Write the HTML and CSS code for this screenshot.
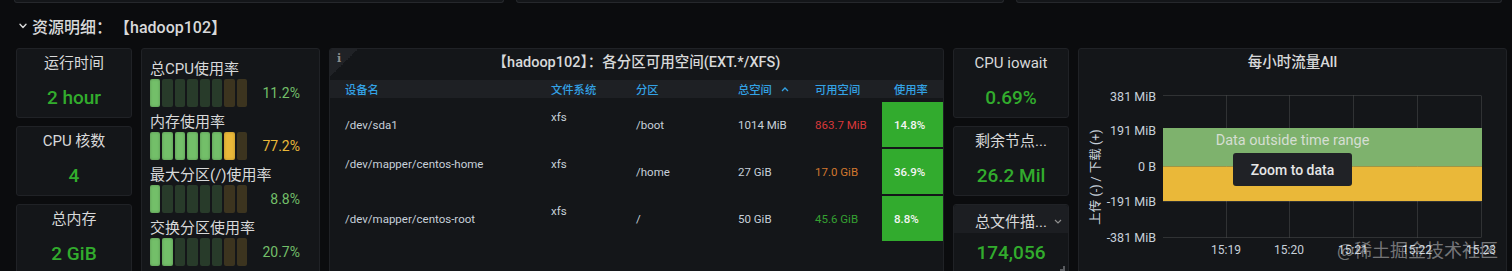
FILE: index.html
```html
<!DOCTYPE html>
<html lang="zh-CN">
<head>
<meta charset="utf-8">
<title>资源明细</title>
<link rel="stylesheet" href="styles.css">
</head>
<body>
<div class="topstrip">
  <div class="stub s1"></div>
  <div class="stub s2"></div>
  <div class="stub s3"></div>
</div>

<div class="rowhead">
  <svg class="chev" viewBox="0 0 8 6" width="8" height="6"><path d="M1 1.2 L4 4.4 L7 1.2" fill="none" stroke="#d8d9da" stroke-width="1.4" stroke-linecap="round" stroke-linejoin="round"/></svg>
  <span class="rowtitle">资源明细：<span class="host">【hadoop102】</span></span>
</div>

<div class="grid">
  <div class="col">
    <div class="panel stat">
      <div class="stat-title">运行时间</div>
      <div class="stat-value">2 hour</div>
    </div>
    <div class="panel stat">
      <div class="stat-title">CPU 核数</div>
      <div class="stat-value">4</div>
    </div>
    <div class="panel stat">
      <div class="stat-title">总内存</div>
      <div class="stat-value">2 GiB</div>
    </div>
  </div>

  <div class="panel gauges">
    <div class="gauge">
      <div class="gauge-title">总CPU使用率</div>
      <div class="gauge-row">
        <div class="lcd"><span class="cell on"></span><span class="cell"></span><span class="cell"></span><span class="cell"></span><span class="cell"></span><span class="cell"></span><span class="cell y"></span><span class="cell y"></span></div>
        <div class="gauge-val green">11.2%</div>
      </div>
    </div>
    <div class="gauge">
      <div class="gauge-title">内存使用率</div>
      <div class="gauge-row">
        <div class="lcd"><span class="cell on"></span><span class="cell on"></span><span class="cell on"></span><span class="cell on"></span><span class="cell on"></span><span class="cell on"></span><span class="cell y on"></span><span class="cell y"></span></div>
        <div class="gauge-val yellow">77.2%</div>
      </div>
    </div>
    <div class="gauge">
      <div class="gauge-title">最大分区(/)使用率</div>
      <div class="gauge-row">
        <div class="lcd"><span class="cell on"></span><span class="cell"></span><span class="cell"></span><span class="cell"></span><span class="cell"></span><span class="cell"></span><span class="cell y"></span><span class="cell y"></span></div>
        <div class="gauge-val green">8.8%</div>
      </div>
    </div>
    <div class="gauge">
      <div class="gauge-title">交换分区使用率</div>
      <div class="gauge-row">
        <div class="lcd"><span class="cell on"></span><span class="cell on"></span><span class="cell"></span><span class="cell"></span><span class="cell"></span><span class="cell"></span><span class="cell y"></span><span class="cell y"></span></div>
        <div class="gauge-val green">20.7%</div>
      </div>
    </div>
  </div>

  <div class="panel table-panel">
    <div class="info-corner"><span class="info-i">i</span></div>
    <div class="panel-title">【hadoop102】：各分区可用空间(EXT.*/XFS)</div>
    <div class="tbl-head">
      <div>设备名</div>
      <div>文件系统</div>
      <div>分区</div>
      <div class="sorted">总空间<svg class="sort-ic" viewBox="0 0 8 5" width="8" height="5"><path d="M1 4 L4 1 L7 4" fill="none" stroke="#33a2e5" stroke-width="1.3"/></svg></div>
      <div>可用空间</div>
      <div class="pad">使用率</div>
    </div>
    <div class="tbl-body">
      <div class="tbl-row">
        <div>/dev/sda1</div>
        <div class="up">xfs</div>
        <div>/boot</div>
        <div>1014 MiB</div>
        <div class="red">863.7 MiB</div>
        <div class="pct">14.8%</div>
      </div>
      <div class="tbl-row">
        <div class="up">/dev/mapper/centos-home</div>
        <div class="up">xfs</div>
        <div>/home</div>
        <div>27 GiB</div>
        <div class="orange">17.0 GiB</div>
        <div class="pct">36.9%</div>
      </div>
      <div class="tbl-row">
        <div>/dev/mapper/centos-root</div>
        <div class="up">xfs</div>
        <div>/</div>
        <div>50 GiB</div>
        <div class="okgreen">45.6 GiB</div>
        <div class="pct">8.8%</div>
      </div>
    </div>
  </div>

  <div class="col">
    <div class="panel stat">
      <div class="stat-title">CPU iowait</div>
      <div class="stat-value">0.69%</div>
    </div>
    <div class="panel stat">
      <div class="stat-title">剩余节点...</div>
      <div class="stat-value">26.2 Mil</div>
    </div>
    <div class="panel stat files">
      <div class="files-head">
        <div class="stat-title">总文件描...</div>
        <svg class="menu-chev" viewBox="0 0 8 5" width="8" height="5"><path d="M1 1 L4 4 L7 1" fill="none" stroke="#8e8e8e" stroke-width="1.2"/></svg>
      </div>
      <div class="stat-value files-value">174,056</div>
      <span class="resize"></span>
    </div>
  </div>

  <div class="panel chart">
    <div class="panel-title">每小时流量All</div>
    <svg class="plot" viewBox="0 0 427 200" width="427" height="200">
      <g class="gl">
        <line x1="84" y1="23.5" x2="402" y2="23.5"/>
        <line x1="84" y1="58.5" x2="402" y2="58.5"/>
        <line x1="84" y1="94.5" x2="402" y2="94.5"/>
        <line x1="84" y1="129.5" x2="402" y2="129.5"/>
        <line x1="84" y1="165.5" x2="402" y2="165.5"/>
        <line x1="147.5" y1="23.5" x2="147.5" y2="165.5"/>
        <line x1="210.5" y1="23.5" x2="210.5" y2="165.5"/>
        <line x1="274.5" y1="23.5" x2="274.5" y2="165.5"/>
        <line x1="338.5" y1="23.5" x2="338.5" y2="165.5"/>
        <line x1="402.5" y1="23.5" x2="402.5" y2="165.5"/>
      </g>
      <rect x="84" y="56" width="319" height="38.5" fill="#7eb26d"/>
      <rect x="84" y="94.5" width="319" height="34.5" fill="#eab839"/>
      <g class="ytick">
        <text x="77" y="24">381 MiB</text>
        <text x="77" y="58">191 MiB</text>
        <text x="77" y="94.5">0 B</text>
        <text x="77" y="129">-191 MiB</text>
        <text x="77" y="165">-381 MiB</text>
      </g>
      <g class="xtick">
        <text x="147" y="177.5">15:19</text>
        <text x="210" y="177.5">15:20</text>
        <text x="274" y="177.5">15:21</text>
        <text x="338" y="177.5">15:22</text>
        <text x="402" y="177.5">15:23</text>
      </g>
      <text class="ylabel" transform="translate(16 105) rotate(-90)">上传 (-) / 下载 (+)</text>
    </svg>
    <div class="nodata">
      <div class="nodata-msg">Data outside time range</div>
      <div class="zoom-btn">Zoom to data</div>
    </div>
  </div>
</div>

<div class="watermark">@稀土掘金技术社区</div>
</body>
</html>
```

FILE: styles.css
```css
* { box-sizing: border-box; }

html, body {
  margin: 0;
  padding: 0;
  width: 1512px;
  height: 271px;
  overflow: hidden;
  background: #0b0c0e;
}

body {
  position: relative;
  font-family: Roboto, "Noto Sans CJK SC", sans-serif;
  color: #d8d9da;
}

/* bottoms of the panels of the row above */
.topstrip {
  display: flex;
  gap: 12px;
  padding-left: 14px;
  height: 3px;
}
.stub {
  height: 3px;
  background: #141619;
  border: 1px solid #26282c;
  border-top: none;
  border-radius: 0 0 3px 3px;
}
.s1 { width: 490px; }
.s2 { width: 488px; }
.s3 { width: 486px; }

/* row header */
.rowhead {
  height: 45px;
  display: flex;
  align-items: center;
  gap: 5px;
  padding-left: 19px;
}
.chev { display: block; }
.rowtitle {
  font-size: 16px;
  font-weight: 500;
  color: #d8d9da;
  white-space: nowrap;
}
.host { margin-left: 10px; }

/* panel grid */
.grid {
  display: flex;
  align-items: flex-start;
  gap: 9px;
  padding-left: 16px;
}
.panel {
  position: relative;
  background: #141619;
  border: 1px solid #202226;
  border-radius: 3px;
}
.col {
  width: 116px;
  display: flex;
  flex-direction: column;
  gap: 8px;
}

/* stat panels */
.stat {
  height: 70px;
  padding-top: 5px;
  text-align: center;
}
.stat-title {
  font-size: 15px;
  line-height: 18px;
  font-weight: 400;
  color: #d8d9da;
  white-space: nowrap;
}
.stat-value {
  margin-top: 14px;
  font-size: 19px;
  line-height: 24px;
  font-weight: 500;
  color: #32ac2d;
  white-space: nowrap;
}
.files { padding-top: 0; }
.files-head {
  position: relative;
  height: 28px;
  padding-top: 8px;
  background: #1c1e22;
  border-radius: 3px 3px 0 0;
}
.menu-chev {
  position: absolute;
  right: 6px;
  top: 14px;
}
.files-value { margin-top: 8px; }
.resize {
  position: absolute;
  right: 3px;
  bottom: 2px;
  width: 5px;
  height: 5px;
  border-right: 2px solid #5a5c60;
  border-bottom: 2px solid #5a5c60;
}

/* bar gauges */
.gauges {
  width: 179px;
  height: 240px;
  padding: 10px 19px 0 8px;
}
.gauge { margin-bottom: 5px; }
.gauge-title {
  font-size: 15px;
  line-height: 20px;
  color: #d8d9da;
  white-space: nowrap;
}
.gauge-row {
  display: flex;
  align-items: center;
  height: 28px;
}
.lcd {
  display: flex;
  gap: 2px;
  width: 97px;
  height: 28px;
}
.cell {
  flex: 1;
  border-radius: 2px;
  background: rgba(115, 191, 105, 0.22);
}
.cell.y { background: rgba(234, 184, 57, 0.19); }
.cell.on {
  background: #73bf69;
  box-shadow: inset 0 0 3px rgba(0, 0, 0, 0.25);
}
.cell.y.on { background: #eab839; }
.gauge-val {
  flex: 1;
  text-align: right;
  font-size: 14px;
}
.green { color: #73bf69; }
.yellow { color: #eab839; }

/* table panel */
.table-panel {
  width: 615px;
  height: 240px;
}
.info-corner {
  position: absolute;
  left: 0;
  top: 0;
  width: 28px;
  height: 28px;
  border-top-left-radius: 3px;
  background: linear-gradient(135deg, #202226 50%, transparent 50%);
}
.info-i {
  position: absolute;
  left: 7px;
  top: 3px;
  font-family: "DejaVu Serif", serif;
  font-size: 11px;
  font-weight: bold;
  color: #8e8e8e;
}
.panel-title {
  padding-top: 5px;
  font-size: 14.5px;
  line-height: 18px;
  font-weight: 500;
  text-align: center;
  color: #d8d9da;
  white-space: nowrap;
}
.tbl-head,
.tbl-row {
  display: grid;
  grid-template-columns: 206px 85px 102px 77px 67px 61px;
  padding-left: 15px;
}
.tbl-head {
  margin-top: 8px;
  height: 18px;
  align-items: center;
  background: #1e2024;
  font-size: 11.3px;
  font-weight: 500;
  color: #33a2e5;
  white-space: nowrap;
}
.sorted {
  display: flex;
  align-items: center;
}
.sort-ic { margin-left: 9px; }
.tbl-head .pad { padding-left: 12px; }
.tbl-body { margin-top: 3px; }
.tbl-row {
  height: 47px;
  align-items: center;
  font-size: 11.5px;
  line-height: 16px;
  color: #c7d0d9;
  white-space: nowrap;
}
.tbl-row .up {
  align-self: start;
  padding-top: 8px;
}
.tbl-row .pct {
  align-self: stretch;
  margin: 1px 0;
  display: flex;
  align-items: center;
  padding-left: 12px;
  background: #32ab2e;
  color: #f4f4f4;
  font-weight: 500;
}
.red { color: #d8383a; }
.orange { color: #d2772e; }
.okgreen { color: #35a032; }

/* graph panel */
.chart {
  width: 429px;
  height: 240px;
}
.plot { display: block; }
.gl line {
  stroke: rgba(255, 255, 255, 0.12);
  stroke-width: 1;
}
.ytick text,
.xtick text,
.ylabel {
  font-family: Roboto, "Noto Sans CJK SC", sans-serif;
  fill: #c7d0d9;
  dominant-baseline: central;
}
.ytick text {
  font-size: 12.5px;
  text-anchor: end;
}
.xtick text {
  font-size: 12px;
  text-anchor: middle;
}
.ylabel {
  font-size: 12.5px;
  text-anchor: middle;
}
.nodata {
  position: absolute;
  left: 0;
  right: 0;
  top: 82px;
  display: flex;
  flex-direction: column;
  align-items: center;
}
.nodata-msg {
  font-size: 14.5px;
  line-height: 20px;
  color: #d5ded2;
  white-space: nowrap;
}
.zoom-btn {
  margin-top: 2px;
  width: 119px;
  height: 33px;
  display: flex;
  align-items: center;
  justify-content: center;
  background: #202226;
  border-radius: 3px;
  font-size: 14px;
  font-weight: 500;
  color: #e6e6e6;
}

/* watermark overlay */
.watermark {
  position: absolute;
  right: 14px;
  top: 237px;
  font-family: "Noto Sans CJK SC", sans-serif;
  font-size: 18px;
  line-height: 24px;
  color: rgba(255, 255, 255, 0.42);
  white-space: nowrap;
}
```
